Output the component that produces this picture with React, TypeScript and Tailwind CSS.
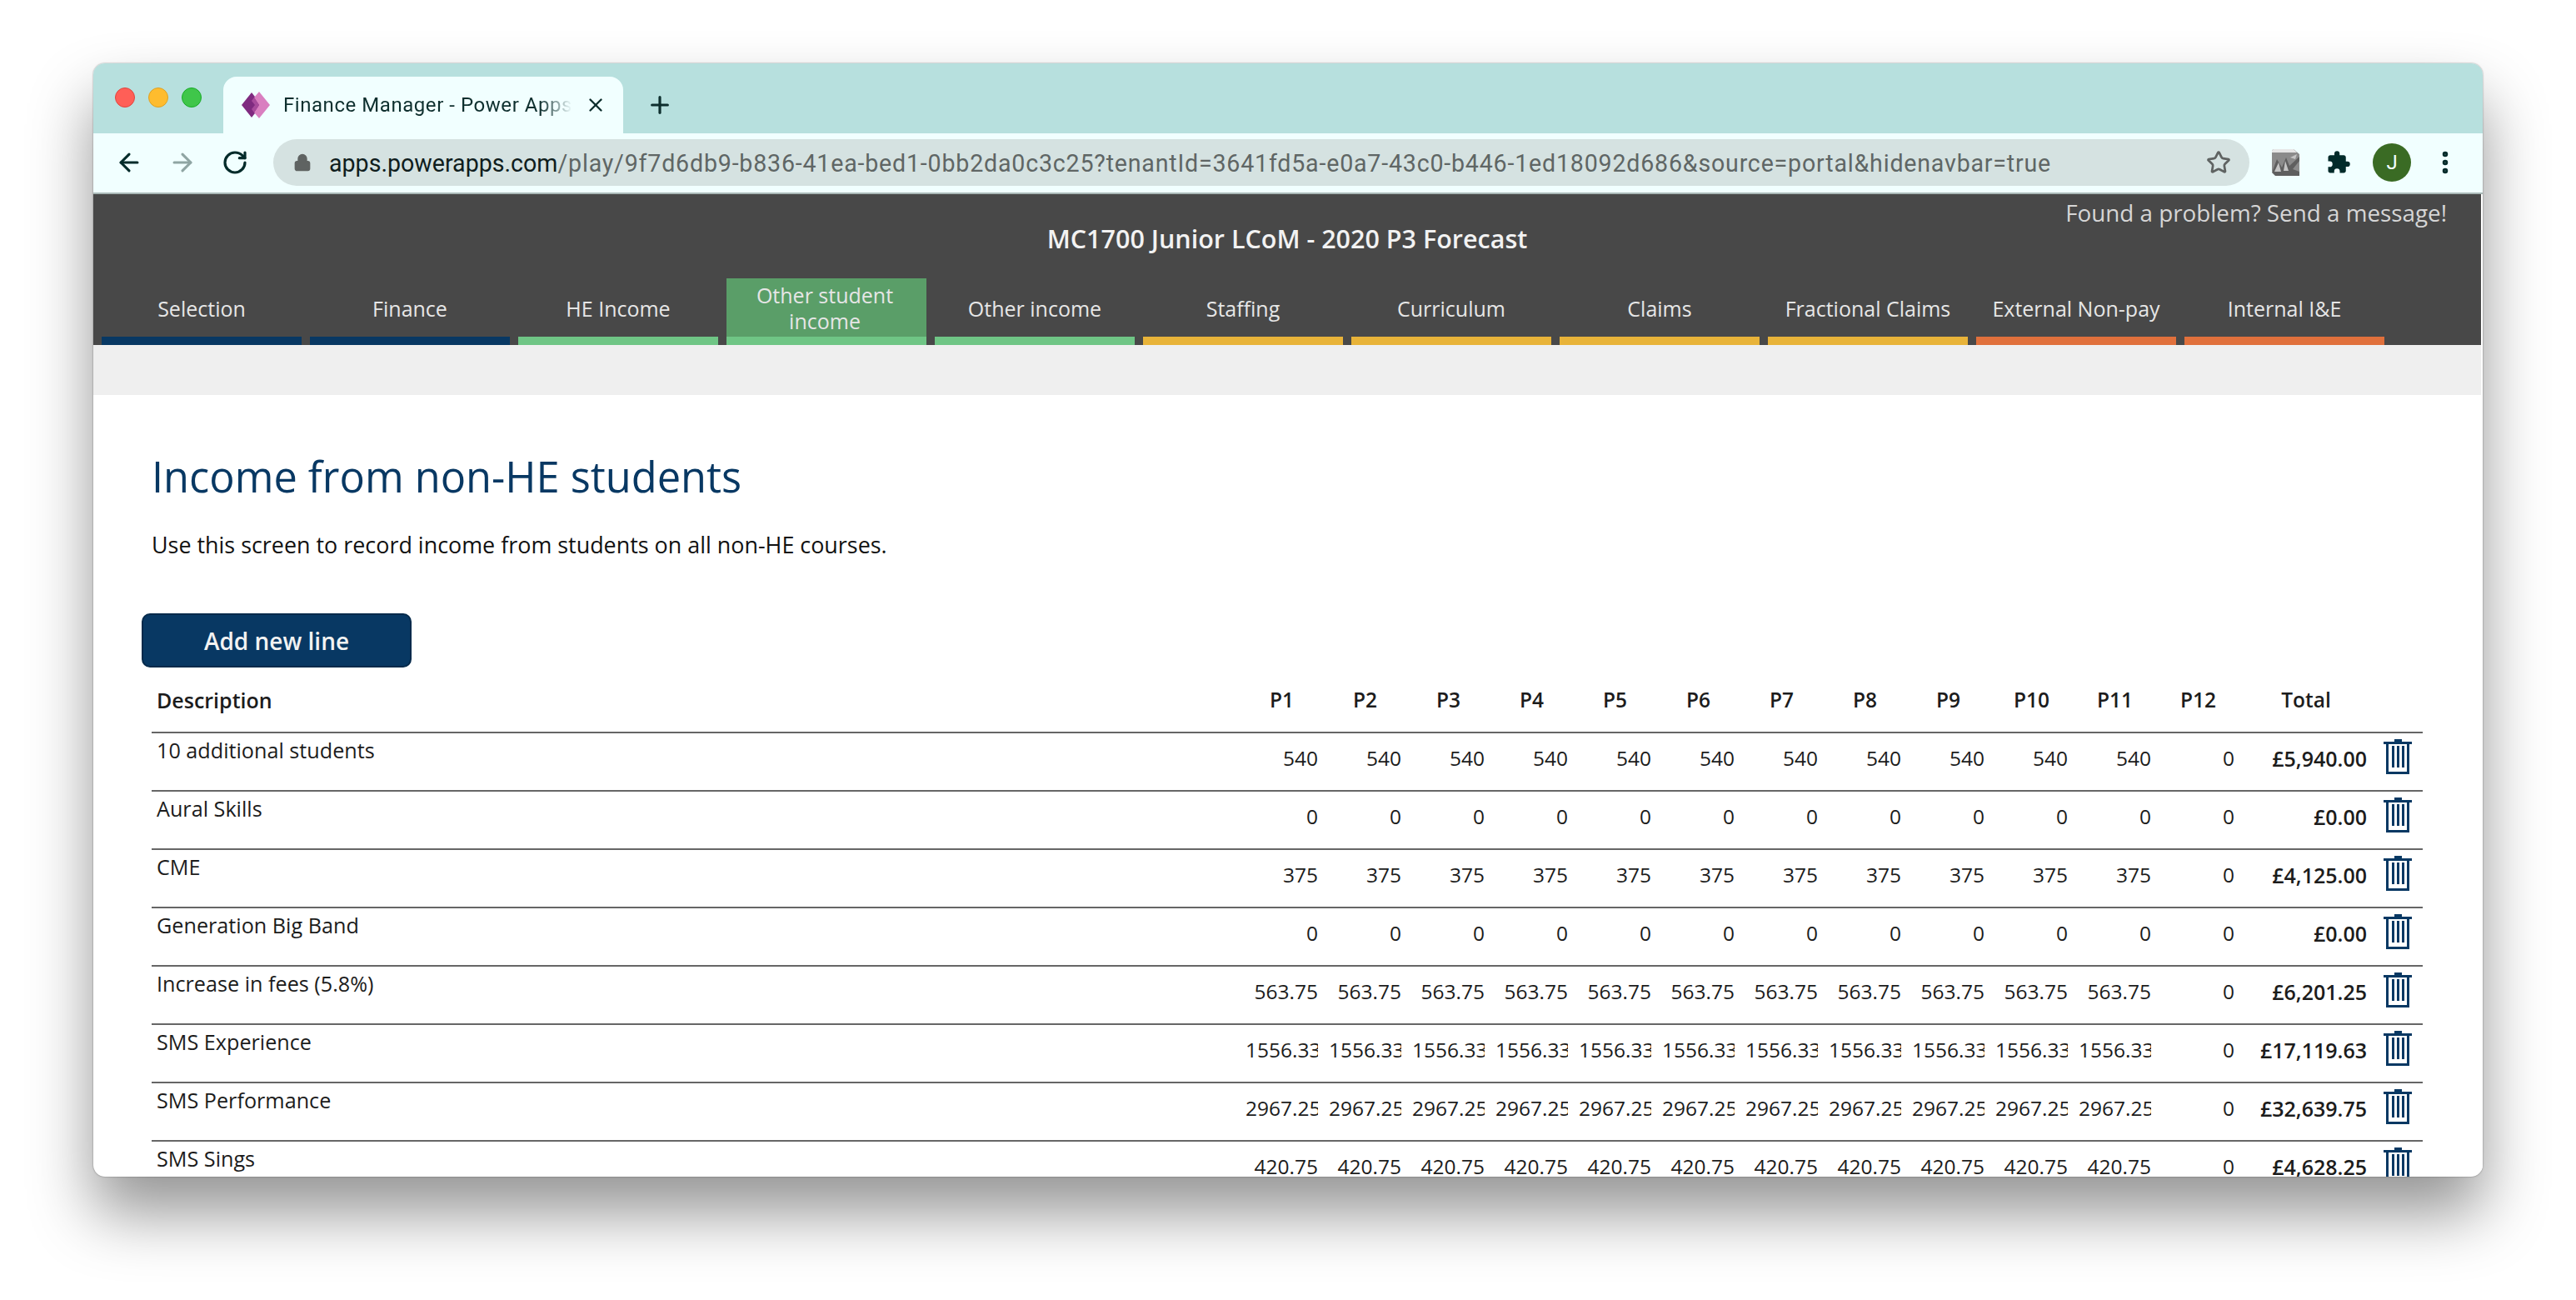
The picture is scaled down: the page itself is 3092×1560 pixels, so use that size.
import React from 'react'
import { ArrowLeft, ArrowRight, RotateCw, Lock, Star, X, Plus, EllipsisVertical } from 'lucide-react'

const font = "[font-family:'Open_Sans',sans-serif]"

const tabs = [
  { label: 'Selection', bar: 'bg-[#083863]' },
  { label: 'Finance', bar: 'bg-[#083863]' },
  { label: 'HE Income', bar: 'bg-[#6fc585]' },
  { label: 'Other student income', bar: 'bg-[#6fc585]', active: true },
  { label: 'Other income', bar: 'bg-[#6fc585]' },
  { label: 'Staffing', bar: 'bg-[#e8b339]' },
  { label: 'Curriculum', bar: 'bg-[#e8b339]' },
  { label: 'Claims', bar: 'bg-[#e8b339]' },
  { label: 'Fractional Claims', bar: 'bg-[#e8b339]' },
  { label: 'External Non-pay', bar: 'bg-[#e0703c]' },
  { label: 'Internal I&E', bar: 'bg-[#e0703c]' },
]

const periods = ['P1', 'P2', 'P3', 'P4', 'P5', 'P6', 'P7', 'P8', 'P9', 'P10', 'P11', 'P12']

const rows = [
  { name: '10 additional students', value: '540', total: '£5,940.00' },
  { name: 'Aural Skills', value: '0', total: '£0.00' },
  { name: 'CME', value: '375', total: '£4,125.00' },
  { name: 'Generation Big Band', value: '0', total: '£0.00' },
  { name: 'Increase in fees (5.8%)', value: '563.75', total: '£6,201.25' },
  { name: 'SMS Experience', value: '1556.33', total: '£17,119.63' },
  { name: 'SMS Performance', value: '2967.25', total: '£32,639.75' },
  { name: 'SMS Sings', value: '420.75', total: '£4,628.25' },
]

const PowerAppsLogo = () => (
  <svg width="34" height="34" viewBox="0 0 34 34">
    <path d="M12 2 L24 17 L12 32 L0 17 Z" fill="#7f2a80" />
    <path d="M21 1 L34 17 L21 33 L15 26 L21 17 L15 8 Z" fill="#d97fc0" />
    <path d="M15 8 L21 17 L15 26 L12 22 L16 17 L12 12 Z" fill="#a84a9c" />
  </svg>
)

const ExtensionThumb = () => (
  <svg width="33" height="33" viewBox="0 0 33 33">
    <path d="M3 0H26L33 6V28a4 4 0 0 1-4 4H6L0 26V3a3 3 0 0 1 3-3z" fill="#8b8b8b" />
    <path d="M3 0H26L30 4H0a3 3 0 0 1 3-4z" fill="#e6e6e6" />
    <path d="M0 28 L6 12 L12 22 L17 10 L21 20 L33 9 V14 L25 24 L33 27 V32 H4 Z" fill="#5f5f5f" />
    <path d="M3 27 L8 16 L11 27 Z M16 14 L20 26 L14 26 Z M22 10 L30 6 L28 12 Z" fill="#c4c4c4" />
  </svg>
)

const Puzzle = () => (
  <svg width="30" height="32" viewBox="0 0 24 24" fill="#022b2a">
    <path d="M20.5 11H19V7c0-1.1-.9-2-2-2h-4V3.5a2.5 2.5 0 0 0-5 0V5H4c-1.1 0-2 .9-2 2v3.8h1.5a2.7 2.7 0 0 1 0 5.4H2V20c0 1.1.9 2 2 2h3.8v-1.5a2.7 2.7 0 0 1 5.4 0V22H17c1.1 0 2-.9 2-2v-4h1.5a2.5 2.5 0 0 0 0-5z" />
  </svg>
)

const Bin = () => (
  <svg width="34" height="42" viewBox="0 0 34 42" fill="#083863" className="shrink-0">
    <rect x="13" y="0" width="9" height="4" />
    <rect x="0" y="3" width="34" height="3" />
    <path d="M3 6h28v36H3z M6 6v33h22V6z" fillRule="evenodd" />
    <rect x="10" y="8" width="3" height="26" />
    <rect x="16" y="8" width="3" height="26" />
    <rect x="22" y="8" width="3" height="26" />
  </svg>
)

export default function App() {
  return (
    <div className="min-h-[1560px] bg-white pt-[76px] pl-[112px]">
      <div className="h-[1336px] w-[2868px] overflow-hidden rounded-[14px] bg-white shadow-[0_0_2px_rgba(0,0,0,0.45),0_44px_76px_rgba(0,0,0,0.42)]">
        {/* Browser tab strip */}
        <div className="flex h-[84px] bg-[#b7e0de]">
          <div className="flex w-[156px] items-center gap-[16px] pb-[2px] pl-[26px]">
            <span className="h-[24px] w-[24px] rounded-full border border-[#e0443e] bg-[#ff5f57]" />
            <span className="h-[24px] w-[24px] rounded-full border border-[#dea123] bg-[#febc2e]" />
            <span className="h-[24px] w-[24px] rounded-full border border-[#1aab29] bg-[#3fc64a]" />
          </div>
          <div className="mt-[16px] flex h-[68px] w-[480px] items-center rounded-t-[16px] bg-[#f1ffff] pl-[22px] text-[#0e2f2e]">
            <PowerAppsLogo />
            <span className="ml-[16px] w-[350px] overflow-hidden whitespace-nowrap text-[24px] tracking-[0.55px] [font-family:'Roboto',sans-serif] [mask-image:linear-gradient(to_right,black_88%,transparent_99%)]">
              Finance Manager - Power Apps
            </span>
            <X size={26} strokeWidth={2.2} className="ml-[12px] text-[#0e2f2e]" />
          </div>
          <div className="mt-[16px] ml-[28px] flex h-[68px] items-center">
            <Plus size={32} strokeWidth={2.4} className="text-[#0e2f2e]" />
          </div>
        </div>

        {/* Browser toolbar */}
        <div className="flex h-[73px] items-center border-b-2 border-[#a9b8b7] bg-[#f1ffff] pb-[1px]">
          <div className="flex w-[216px] items-center gap-[30px] pl-[26px]">
            <ArrowLeft size={34} strokeWidth={2.2} className="text-[#022b2a]" />
            <ArrowRight size={34} strokeWidth={2.2} className="text-[#8fa5a3]" />
            <RotateCw size={32} strokeWidth={2.4} className="text-[#022b2a]" />
          </div>
          <div className="flex h-[56px] w-[2372px] items-center rounded-full bg-[#d5e2e1] pr-[22px] pl-[24px]">
            <Lock size={22} fill="#5f6362" strokeWidth={2.4} className="text-[#5f6362]" />
            <span className="ml-[21px] flex-1 pt-[2px] whitespace-nowrap text-[28.6px] tracking-[0.8px] [font-family:'Roboto',sans-serif] text-[#5f6665]">
              <span className="tracking-normal text-[#0f1d1d]">apps.powerapps.com</span>/play/9f7d6db9-b836-41ea-bed1-0bb2da0c3c25?tenantId=3641fd5a-e0a7-43c0-b446-1ed18092d686&source=portal&hidenavbar=true
            </span>
            <Star size={30} strokeWidth={2.2} className="text-[#5f6362]" />
          </div>
          <div className="ml-[27px]"><ExtensionThumb /></div>
          <div className="ml-[32px]"><Puzzle /></div>
          <div className="ml-[26px] flex h-[46px] w-[46px] items-center justify-center rounded-full bg-[#3a6b24] text-[24px] text-[#f1ffff] [font-family:'Roboto',sans-serif]">J</div>
          <EllipsisVertical size={34} strokeWidth={2.6} className="ml-[24px] text-[#022b2a]" />
        </div>

        <div className={`border-r-2 border-white ${font}`}>
          {/* App header */}
          <div className="bg-[#484848]">
            <div className="relative h-[101px] pt-[31px] text-center text-[30.5px] leading-[44px] font-semibold text-[#f2f2f2]">
              MC1700 Junior LCoM - 2020 P3 Forecast
              <span className="absolute top-0 right-[41px] text-[27.8px] leading-[44px] font-normal text-[#d6d6d6]">
                Found a problem? Send a message!
              </span>
            </div>
            <div className="flex gap-[10px] pl-[10px]">
              {tabs.map(tab => (
                <div key={tab.label} className="flex h-[80px] w-[240px] flex-col">
                  <div
                    className={`flex flex-1 items-center justify-center pt-[2px] text-center text-[25px] leading-[31px] ${
                      tab.active ? 'bg-[#5a9e68] pr-[12px] pl-[8px] text-[#e6e6e6]' : 'px-[8px] text-[#e6e6e6]'
                    }`}
                  >
                    {tab.label}
                  </div>
                  <div className={`h-[10px] ${tab.bar}`} />
                </div>
              ))}
            </div>
          </div>
          <div className="h-[60px] bg-[#efefef]" />

          {/* Screen body */}
          <div className="pl-[70px]">
            <h1 className="pt-[62px] text-[50.5px] leading-[72px] text-[#083863]">Income from non-HE students</h1>
            <p className="mt-[28px] text-[26.9px] leading-[36px] text-[#111]">
              Use this screen to record income from students on all non-HE courses.
            </p>
            <button className="mt-[64px] -ml-[12px] h-[65px] w-[324px] rounded-[10px] border-2 border-[#052a4b] bg-[#083863] text-[28px] font-semibold text-[#f2f2f2]">
              Add new line
            </button>

            {/* Table */}
            <div className="w-[2726px] text-[#1c1c1c]">
              <div className="flex h-[79px] items-end border-b-2 border-[#666] pb-[20px] text-[24.5px] leading-[36px] font-semibold">
                <div className="w-[1313px] pl-[6px] text-[25px]">Description</div>
                <div className="flex gap-[13px]">
                  {periods.map(p => (
                    <div key={p} className="w-[87px] text-center">{p}</div>
                  ))}
                </div>
                <div className="ml-[13px] w-[146px] text-center">Total</div>
              </div>
              {rows.map(row => (
                <div key={row.name} className="flex h-[70px] border-b-2 border-[#666] text-[24.5px] leading-[36px]">
                  <div className="w-[1313px] pt-[2px] pl-[6px] text-[25.2px]">{row.name}</div>
                  <div className="flex gap-[13px] pt-[12px]">
                    {periods.map((p, i) => (
                      <div key={p} className="w-[87px] overflow-hidden text-right whitespace-nowrap">
                        {i === 11 ? '0' : row.value}
                      </div>
                    ))}
                  </div>
                  <div className="ml-[13px] w-[146px] pt-[12px] text-right text-[25px] font-semibold">{row.total}</div>
                  <div className="ml-[20px] pt-[7px]"><Bin /></div>
                </div>
              ))}
            </div>
          </div>
        </div>
      </div>
    </div>
  )
}
